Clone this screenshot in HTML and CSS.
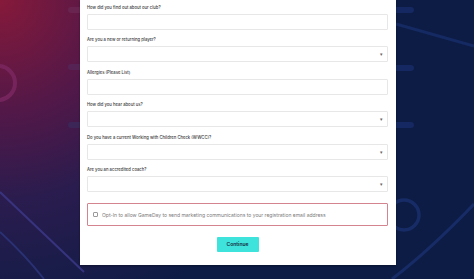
FILE: index.html
```html
<!DOCTYPE html>
<html lang="en">
<head>
    <meta charset="UTF-8">
    <title>Registration</title>
    <link rel="stylesheet" href="styles.css">
</head>
<body>
<div class="page">
    <svg class="decor" width="474" height="279" viewBox="0 0 474 279">
        <!-- left side -->
        <circle cx="-2" cy="83" r="17" fill="none" stroke="#7c2862" stroke-width="4" opacity="0.8"/>
        <rect x="68" y="7" width="16" height="6" rx="3" fill="#6a2450"/>
        <rect x="68" y="64" width="16" height="6" rx="3" fill="#562454"/>
        <rect x="68" y="122" width="16" height="6" rx="3" fill="#3c2658"/>
        <path d="M0 192 Q 40 230 84 272" fill="none" stroke="#3d3a8c" stroke-width="2" opacity="0.8"/>
        <path d="M0 232 Q 25 255 44 279" fill="none" stroke="#2f3a88" stroke-width="2" opacity="0.7"/>
        <!-- right side -->
        <rect x="392" y="7" width="22" height="6" rx="3" fill="#152861"/>
        <rect x="392" y="65" width="22" height="6" rx="3" fill="#152861"/>
        <rect x="392" y="122" width="22" height="6" rx="3" fill="#152861"/>
        <path d="M396 24 L474 46" fill="none" stroke="#152a62" stroke-width="3"/>
        <circle cx="404" cy="215" r="15" fill="none" stroke="#172c66" stroke-width="3.5"/>
        <path d="M392 279 Q 430 250 474 204" fill="none" stroke="#172c66" stroke-width="3"/>
    </svg>

    <div class="card">
        <div class="field">
            <label class="label">How did you find out about our club?</label>
            <div class="input"></div>
        </div>
        <div class="field">
            <label class="label">Are you a new or returning player?</label>
            <div class="input select"><span class="caret">&#9662;</span></div>
        </div>
        <div class="field">
            <label class="label">Allergies (Please List)</label>
            <div class="input"></div>
        </div>
        <div class="field">
            <label class="label">How did you hear about us?</label>
            <div class="input select"><span class="caret">&#9662;</span></div>
        </div>
        <div class="field">
            <label class="label">Do you have a current Working with Children Check (WWCC)?</label>
            <div class="input select"><span class="caret">&#9662;</span></div>
        </div>
        <div class="field">
            <label class="label">Are you an accredited coach?</label>
            <div class="input select"><span class="caret">&#9662;</span></div>
        </div>

        <div class="optin">
            <span class="checkbox"></span>
            <span class="optin-text">Opt-In to allow GameDay to send marketing communications to your registration email address</span>
        </div>

        <div class="actions">
            <button class="btn">Continue</button>
        </div>
    </div>
</div>
</body>
</html>
```

FILE: styles.css
```css
* {
    padding: 0;
    margin: 0;
    box-sizing: border-box;
}

html, body {
    width: 100%;
    height: 100%;
    overflow: hidden;
}

body {
    font-family: Inter, "Noto Sans", sans-serif;
    background: radial-gradient(circle at 0 0, #86193a 0, #531848 110px, #2a1c4e 200px, #0d1c45 330px);
    background-color: #0d1c45;
}

.page {
    position: relative;
    width: 474px;
    height: 279px;
    display: flex;
    justify-content: center;
}

.decor {
    position: absolute;
    left: 0;
    top: 0;
}

.card {
    position: relative;
    width: 316px;
    height: 265px;
    margin-left: 2px;
    background: #fff;
    padding: 3px 8px 0 7px;
    display: flex;
    flex-direction: column;
    gap: 5.4px;
    box-shadow: 0 1px 2px rgba(0, 0, 0, 0.35);
}

.field {
    display: flex;
    flex-direction: column;
}

.label {
    font-size: 4.2px;
    font-weight: 500;
    line-height: 10px;
    height: 10px;
    margin-bottom: 1px;
    color: #3a3a3a;
}

.input {
    height: 16px;
    border: 1px solid #e7e7e7;
    border-radius: 1px;
    background: #fff;
    display: flex;
    align-items: center;
    justify-content: flex-end;
    padding-right: 4px;
}

.caret {
    font-size: 5px;
    color: #666;
}

.optin {
    margin-top: 6px;
    height: 23px;
    border: 1px solid #d4848f;
    border-radius: 1px;
    display: flex;
    align-items: center;
    padding-left: 5px;
    gap: 4px;
}

.checkbox {
    width: 5px;
    height: 5px;
    border: 1px solid #9a9a9a;
    border-radius: 1px;
}

.optin-text {
    font-size: 5px;
    color: #7a7a7a;
}

.actions {
    display: flex;
    justify-content: center;
    margin-top: 5px;
}

.btn {
    width: 42px;
    height: 15px;
    border: none;
    border-radius: 1px;
    background: #3ee3dc;
    color: #15293f;
    font-family: Inter, "Noto Sans", sans-serif;
    font-size: 5px;
    font-weight: 600;
}
```
